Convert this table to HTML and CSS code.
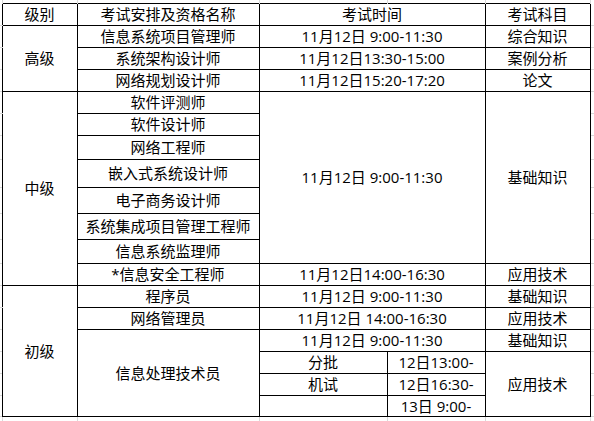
FILE: index.html
```html
<!DOCTYPE html>
<html lang="zh">
<head>
<meta charset="utf-8">
<title>考试安排</title>
<link rel="stylesheet" href="styles.css">
</head>
<body>
<table class="exam">
  <colgroup>
    <col class="c-gut-l">
    <col class="c-level">
    <col class="c-name">
    <col class="c-time-a">
    <col class="c-time-b">
    <col class="c-subject">
    <col class="c-gut-r">
  </colgroup>
  <tr class="gut-top">
    <td class="g"></td><td class="gv"></td><td class="gv"></td><td class="gv"></td><td class="gv"></td><td class="gv"></td><td class="g"></td>
  </tr>
  <tr class="h22">
    <td class="gh"></td>
    <td>级别</td>
    <td>考试安排及资格名称</td>
    <td colspan="2">考试时间</td>
    <td>考试科目</td>
    <td class="gh"></td>
  </tr>
  <tr class="h22">
    <td class="gh"></td>
    <td rowspan="3">高级</td>
    <td>信息系统项目管理师</td>
    <td colspan="2">11月12日 9:00-11:30</td>
    <td>综合知识</td>
    <td class="gh"></td>
  </tr>
  <tr class="h22">
    <td class="gh"></td>
    <td>系统架构设计师</td>
    <td colspan="2">11月12日13:30-15:00</td>
    <td>案例分析</td>
    <td class="gh"></td>
  </tr>
  <tr class="h22">
    <td class="gh"></td>
    <td>网络规划设计师</td>
    <td colspan="2">11月12日15:20-17:20</td>
    <td>论文</td>
    <td class="gh"></td>
  </tr>
  <tr class="h22">
    <td class="gh"></td>
    <td rowspan="8">中级</td>
    <td>软件评测师</td>
    <td colspan="2" rowspan="7">11月12日 9:00-11:30</td>
    <td rowspan="7">基础知识</td>
    <td class="gh"></td>
  </tr>
  <tr class="h22"><td class="gh"></td><td>软件设计师</td><td class="gh"></td></tr>
  <tr class="h24"><td class="gh"></td><td>网络工程师</td><td class="gh"></td></tr>
  <tr class="h28"><td class="gh"></td><td>嵌入式系统设计师</td><td class="gh"></td></tr>
  <tr class="h26"><td class="gh"></td><td>电子商务设计师</td><td class="gh"></td></tr>
  <tr class="h26"><td class="gh"></td><td>系统集成项目管理工程师</td><td class="gh"></td></tr>
  <tr class="h24"><td class="gh"></td><td>信息系统监理师</td><td class="gh"></td></tr>
  <tr class="h22">
    <td class="gh"></td>
    <td>*信息安全工程师</td>
    <td colspan="2">11月12日14:00-16:30</td>
    <td>应用技术</td>
    <td class="gh"></td>
  </tr>
  <tr class="h22">
    <td class="gh"></td>
    <td rowspan="6">初级</td>
    <td>程序员</td>
    <td colspan="2">11月12日 9:00-11:30</td>
    <td>基础知识</td>
    <td class="gh"></td>
  </tr>
  <tr class="h22">
    <td class="gh"></td>
    <td>网络管理员</td>
    <td colspan="2">11月12日 14:00-16:30</td>
    <td>应用技术</td>
    <td class="gh"></td>
  </tr>
  <tr class="h22">
    <td class="gh"></td>
    <td rowspan="4">信息处理技术员</td>
    <td colspan="2">11月12日 9:00-11:30</td>
    <td>基础知识</td>
    <td class="gh"></td>
  </tr>
  <tr class="h22">
    <td class="gh"></td>
    <td>分批</td>
    <td>12日13:00-</td>
    <td rowspan="3">应用技术</td>
    <td class="gh"></td>
  </tr>
  <tr class="h22">
    <td class="gh"></td>
    <td>机试</td>
    <td>12日16:30-</td>
    <td class="gh"></td>
  </tr>
  <tr class="h21">
    <td class="gh"></td>
    <td></td>
    <td>13日 9:00-</td>
    <td class="gh"></td>
  </tr>
  <tr class="gut-bottom">
    <td class="g"></td><td class="gv"></td><td class="gv"></td><td class="gv"></td><td class="gv"></td><td class="gv"></td><td class="g"></td>
  </tr>
</table>
</body>
</html>
```
FILE: styles.css
```css
html, body {
  margin: 0;
  padding: 0;
  background: #ffffff;
}

.exam {
  border-collapse: collapse;
  table-layout: fixed;
  width: 594px;
  font-family: "Open Sans", "Noto Sans CJK SC", "Noto Sans", sans-serif;
  font-size: 15px;
  line-height: 18px;
  color: #000;
}

.c-gut-l { width: 2px; }
.c-level { width: 75px; }
.c-name { width: 182px; }
.c-time-a { width: 128px; }
.c-time-b { width: 98px; }
.c-subject { width: 105px; }
.c-gut-r { width: 4px; }

.exam td {
  border: 1px solid #000;
  padding: 0;
  text-align: center;
  vertical-align: middle;
  white-space: nowrap;
  overflow: hidden;
}

/* Spreadsheet gridline stubs outside the bordered table */
.exam td.g {
  border: none;
}

.exam td.gh {
  border: none;
  border-bottom: 1px solid #d9d9d9;
}

.exam td.gv {
  border: none;
  border-right: 1px solid #d9d9d9;
}

.exam td.gv:first-of-type,
.exam td.g + td.gv {
  border-left: 1px solid #d9d9d9;
}

.gut-top { height: 3px; }
.gut-bottom { height: 5px; }

.h21 { height: 21px; }
.h22 { height: 22px; }
.h24 { height: 24px; }
.h26 { height: 26px; }
.h28 { height: 28px; }
```
